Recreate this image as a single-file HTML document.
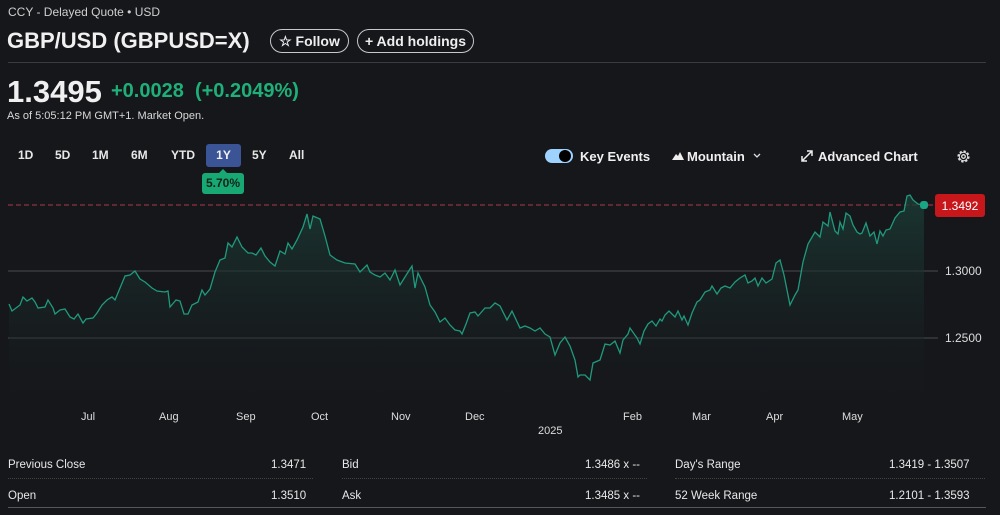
<!DOCTYPE html>
<html><head><meta charset="utf-8"><style>
*{margin:0;padding:0;box-sizing:border-box}
body{width:1000px;height:515px;background:#16171b;color:#f0f0f0;font-family:"Liberation Sans",sans-serif;position:relative;overflow:hidden}
.a{position:absolute;white-space:nowrap}
.btn{position:absolute;border:1px solid #c8c8c8;border-radius:12px;height:24px;font-size:14px;font-weight:bold;line-height:22px;padding:0 11px;color:#eee;white-space:nowrap;text-align:center}
.tab{position:absolute;top:148px;font-size:12px;font-weight:bold;color:#e8e8e8}
.m{position:absolute;top:411px;font-size:11px;color:#ddd}
.r{position:absolute;font-size:11.5px;color:#e8e8e8;white-space:nowrap}
.dot{position:absolute;height:0;border-top:1px dotted #444}
</style></head><body>
<div class="a" style="left:8px;top:5px;font-size:12px;color:#cfcfcf">CCY - Delayed Quote • USD</div>
<div class="a" style="left:7px;top:28px;font-size:22px;font-weight:bold">GBP/USD (GBPUSD=X)</div>
<div class="btn" style="left:270px;top:29px;width:79px;padding:0">☆ Follow</div>
<div class="btn" style="left:357px;top:29px;width:117px;padding:0">+ Add holdings</div>
<div class="a" style="left:8px;top:62px;width:978px;height:1px;background:#3a3b40"></div>
<div class="a" style="left:7px;top:74px;font-size:31px;font-weight:bold">1.3495</div>
<div class="a" style="left:111px;top:80px;font-size:20px;font-weight:bold;color:#1fb07a">+0.0028 &nbsp;(+0.2049%)</div>
<div class="a" style="left:7px;top:110px;font-size:11px;color:#d8d8d8">As of 5:05:12 PM GMT+1. Market Open.</div>
<div class="tab" style="left:18px">1D</div><div class="tab" style="left:55px">5D</div><div class="tab" style="left:92px">1M</div><div class="tab" style="left:131px">6M</div><div class="tab" style="left:171px">YTD</div>
<div class="a" style="left:206px;top:144px;width:35px;height:23px;background:#3a5496;border-radius:3px;font-size:12px;font-weight:bold;text-align:center;line-height:23px">1Y</div>
<div class="tab" style="left:252px">5Y</div><div class="tab" style="left:289px">All</div>
<div class="a" style="left:202px;top:173px;width:42px;height:21px;background:#18a873;border-radius:3px;font-size:12px;font-weight:bold;color:#10241c;text-align:center;line-height:21px">5.70%</div>
<div class="a" style="left:219px;top:169px;width:0;height:0;border-left:4px solid transparent;border-right:4px solid transparent;border-bottom:4px solid #18a873"></div>
<div class="a" style="left:545px;top:149px;width:28px;height:14px;border-radius:7px;background:#9fd3ff"></div>
<div class="a" style="left:559px;top:150px;width:12px;height:12px;border-radius:6px;background:#000"></div>
<div class="a" style="left:580px;top:149px;font-size:13px;font-weight:bold">Key Events</div>
<svg class="a" style="left:672px;top:151px" width="12" height="10"><path d="M0 9L4 3L6 5L8 1L12 9Z" fill="#eee"/></svg>
<div class="a" style="left:687px;top:149px;font-size:13px;font-weight:bold">Mountain</div>
<svg class="a" style="left:753px;top:153px" width="8" height="6"><path d="M1 1L4 4L7 1" stroke="#ddd" fill="none" stroke-width="1.3"/></svg>
<svg class="a" style="left:801px;top:150px" width="12" height="12"><path d="M1 11L11 1M6 1H11V6M1 6V11H6" stroke="#eee" fill="none" stroke-width="1.5"/></svg>
<div class="a" style="left:818px;top:149px;font-size:13px;font-weight:bold">Advanced Chart</div>
<svg class="a" style="left:956px;top:149px" width="15" height="15" viewBox="0 0 15 15"><circle cx="7.5" cy="7.5" r="5" stroke="#ddd" stroke-width="2.2" fill="none" stroke-dasharray="2.2 1.7"/><circle cx="7.5" cy="7.5" r="4.2" stroke="#ddd" stroke-width="1" fill="none"/><circle cx="7.5" cy="7.5" r="1.8" stroke="#ddd" stroke-width="1.3" fill="none"/></svg>
<svg class="a" style="left:0;top:0" width="1000" height="410">
<defs><linearGradient id="g" x1="0" y1="0" x2="0" y2="1"><stop offset="0" stop-color="#1b3e37" stop-opacity="0.8"/><stop offset="1" stop-color="#16171b" stop-opacity="0.2"/></linearGradient></defs>
<line x1="8" y1="271" x2="938" y2="271" stroke="#4a4b50"/>
<line x1="8" y1="338" x2="938" y2="338" stroke="#4a4b50"/>
<line x1="8" y1="205" x2="938" y2="205" stroke="#b0384a" stroke-dasharray="5 3"/>
<path id="p" d="M9,304 L12,311 20,305 23,297 27,301 32,298 35,302 38,308 45,307 48,300 53,308 55,314 60,310 65,309 70,317 74,319 78,314 83,323 86,319 93,318 97,313 102,305 107,300 112,297 115,300 120,288 125,276 130,275 135,271 140,279 145,282 152,288 157,291 165,292 168,291 170,307 176,300 180,301 184,314 188,314 192,305 198,302 202,290 205,295 210,289 215,272 220,260 225,258 228,243 232,247 237,237 242,247 248,253 252,253 256,255 261,248 265,256 270,262 275,266 280,251 285,254 288,243 292,249 297,240 303,227 307,214 310,229 313,216 320,219 325,236 330,255 337,260 345,263 355,264 360,272 367,265 370,272 375,275 380,277 385,273 390,280 395,270 400,285 405,277 410,269 412,266 415,288 418,273 425,287 430,305 435,312 440,322 445,318 450,325 455,330 460,331 462,334 466,324 470,313 475,312 478,316 485,308 490,308 495,303 500,306 507,320 512,311 520,328 525,326 530,328 535,331 540,328 545,334 550,337 555,355 560,343 565,337 570,346 575,360 578,377 580,375 585,375 590,380 593,363 600,360 605,344 610,345 615,341 620,353 623,340 628,334 630,328 637,338 640,344 644,331 648,324 652,321 656,326 660,319 662,321 665,315 669,311 675,317 678,311 682,320 684,316 688,325 692,313 697,302 700,300 705,292 710,290 712,286 717,294 721,288 725,286 730,288 735,282 740,278 745,275 748,283 752,281 755,278 758,286 762,278 766,283 772,279 776,263 780,260 784,275 790,305 795,295 798,290 803,262 808,244 815,232 820,237 823,222 828,226 830,212 835,231 838,234 840,222 843,229 846,213 850,216 853,225 857,232 860,234 862,233 866,223 870,236 874,232 877,244 880,231 883,236 886,230 890,229 895,218 900,212 904,211 907,196 910,195 913,200 918,204 924,205" fill="none"/>
<path d="M9,304 L12,311 20,305 23,297 27,301 32,298 35,302 38,308 45,307 48,300 53,308 55,314 60,310 65,309 70,317 74,319 78,314 83,323 86,319 93,318 97,313 102,305 107,300 112,297 115,300 120,288 125,276 130,275 135,271 140,279 145,282 152,288 157,291 165,292 168,291 170,307 176,300 180,301 184,314 188,314 192,305 198,302 202,290 205,295 210,289 215,272 220,260 225,258 228,243 232,247 237,237 242,247 248,253 252,253 256,255 261,248 265,256 270,262 275,266 280,251 285,254 288,243 292,249 297,240 303,227 307,214 310,229 313,216 320,219 325,236 330,255 337,260 345,263 355,264 360,272 367,265 370,272 375,275 380,277 385,273 390,280 395,270 400,285 405,277 410,269 412,266 415,288 418,273 425,287 430,305 435,312 440,322 445,318 450,325 455,330 460,331 462,334 466,324 470,313 475,312 478,316 485,308 490,308 495,303 500,306 507,320 512,311 520,328 525,326 530,328 535,331 540,328 545,334 550,337 555,355 560,343 565,337 570,346 575,360 578,377 580,375 585,375 590,380 593,363 600,360 605,344 610,345 615,341 620,353 623,340 628,334 630,328 637,338 640,344 644,331 648,324 652,321 656,326 660,319 662,321 665,315 669,311 675,317 678,311 682,320 684,316 688,325 692,313 697,302 700,300 705,292 710,290 712,286 717,294 721,288 725,286 730,288 735,282 740,278 745,275 748,283 752,281 755,278 758,286 762,278 766,283 772,279 776,263 780,260 784,275 790,305 795,295 798,290 803,262 808,244 815,232 820,237 823,222 828,226 830,212 835,231 838,234 840,222 843,229 846,213 850,216 853,225 857,232 860,234 862,233 866,223 870,236 874,232 877,244 880,231 883,236 886,230 890,229 895,218 900,212 904,211 907,196 910,195 913,200 918,204 924,205 L924,400 L9,400 Z" fill="url(#g)"/>
<use href="#p" stroke="#1f9a7e" stroke-width="1.3"/>
<rect x="920" y="201" width="8" height="8" rx="3" fill="#1aa585"/>
<rect x="935" y="194" width="50" height="23" rx="3" fill="#c8171a"/>
<text x="960" y="210" font-size="12" fill="#fff" text-anchor="middle" font-family="Liberation Sans">1.3492</text>
<text x="945" y="275" font-size="12" fill="#ddd" font-family="Liberation Sans">1.3000</text>
<text x="945" y="342" font-size="12" fill="#ddd" font-family="Liberation Sans">1.2500</text>
</svg>
<div class="m" style="left:81px">Jul</div><div class="m" style="left:159px">Aug</div><div class="m" style="left:236px">Sep</div><div class="m" style="left:311px">Oct</div><div class="m" style="left:391px">Nov</div><div class="m" style="left:465px">Dec</div><div class="m" style="left:538px;top:425px">2025</div><div class="m" style="left:623px">Feb</div><div class="m" style="left:692px">Mar</div><div class="m" style="left:766px">Apr</div><div class="m" style="left:842px">May</div>
<div class="r" style="left:8px;top:459px">Previous Close</div><div class="r" style="left:271px;top:459px">1.3471</div>
<div class="r" style="left:342px;top:459px">Bid</div><div class="r" style="left:585px;top:459px">1.3486 x --</div>
<div class="r" style="left:675px;top:459px">Day's Range</div><div class="r" style="left:889px;top:459px">1.3419 - 1.3507</div>
<div class="r" style="left:8px;top:490px">Open</div><div class="r" style="left:271px;top:490px">1.3510</div>
<div class="r" style="left:342px;top:490px">Ask</div><div class="r" style="left:585px;top:490px">1.3485 x --</div>
<div class="r" style="left:675px;top:490px">52 Week Range</div><div class="r" style="left:889px;top:490px">1.2101 - 1.3593</div>
<div class="dot" style="left:8px;top:478px;width:305px"></div><div class="dot" style="left:342px;top:478px;width:305px"></div><div class="dot" style="left:675px;top:478px;width:310px"></div>
<div class="a" style="left:8px;top:507px;width:978px;height:1px;background:#55565a"></div>
</body></html>
